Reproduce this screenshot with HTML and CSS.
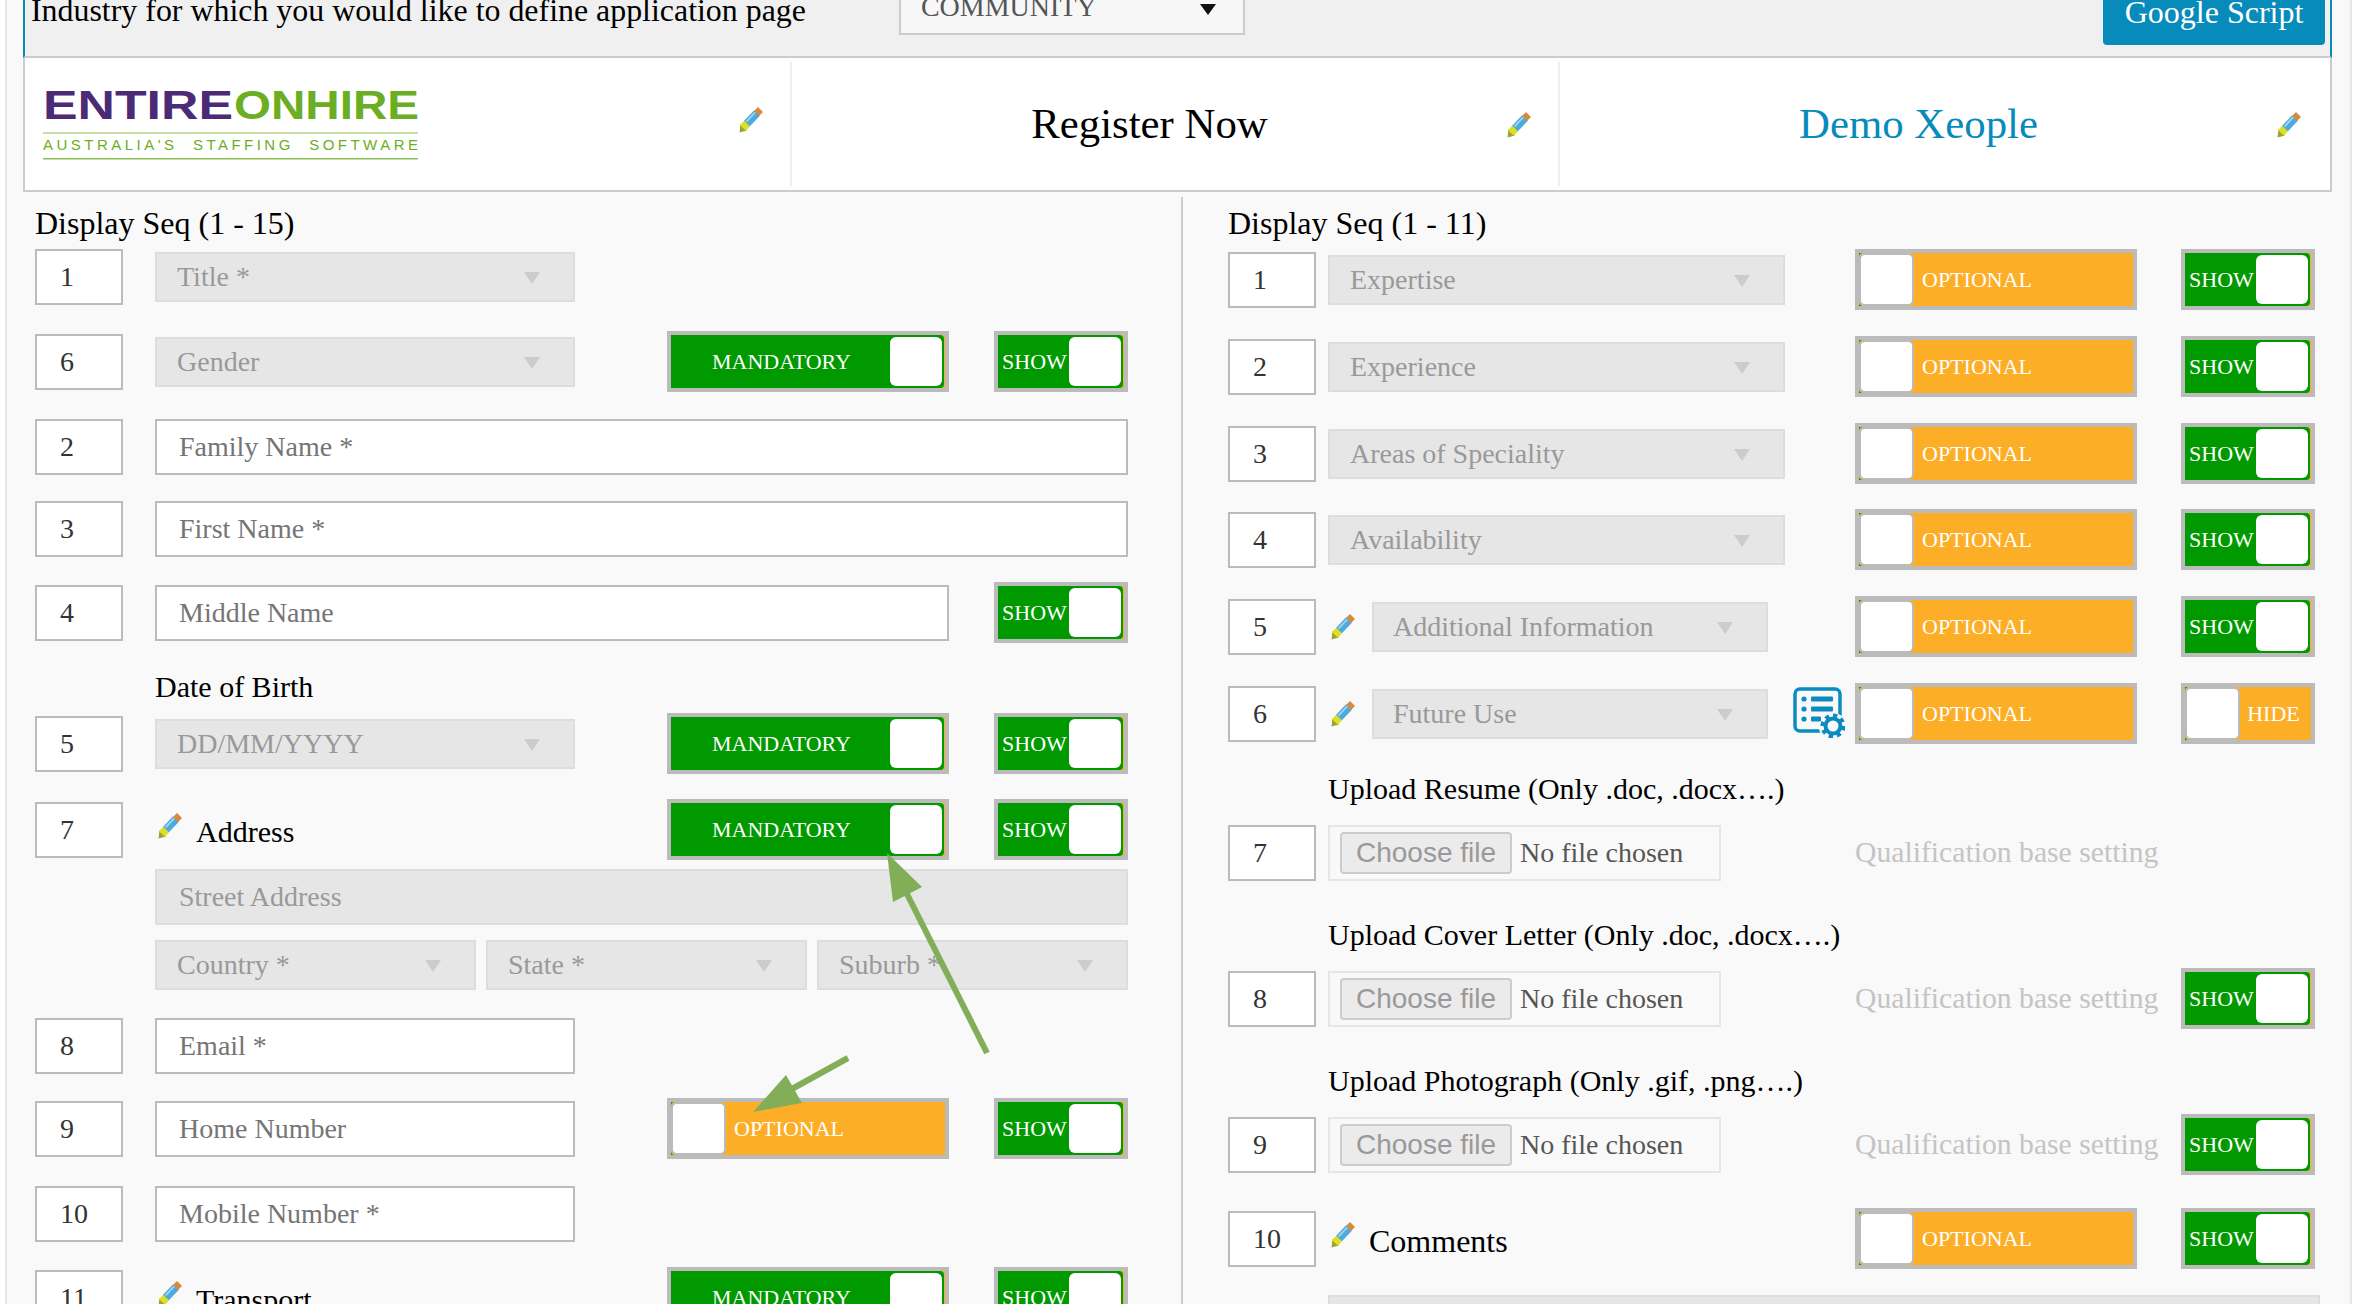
FILE: index.html
```html
<!DOCTYPE html>
<html lang="en">
<head>
<meta charset="utf-8">
<title>Application page settings</title>
<link rel="stylesheet" href="styles.css">
</head>
<body>
<svg class="defs" aria-hidden="true">
  <symbol id="pencil" viewBox="0 0 25 26">
    <polygon points="0.5,25.5 1.5,17 8,23.5" fill="#9aa23a"/>
    <line x1="4" y1="21" x2="8.5" y2="16" stroke="#dde022" stroke-width="8"/>
    <line x1="8" y1="16.5" x2="18" y2="6" stroke="#4ea9de" stroke-width="8"/>
    <line x1="7.5" y1="14.5" x2="16.5" y2="5" stroke="#a9d6f0" stroke-width="1.8"/>
    <line x1="17.5" y1="6.5" x2="21.5" y2="2.5" stroke="#d58a3e" stroke-width="7"/>
  </symbol>
</svg>

<div class="page">
  <div class="topbar">
    <span class="industry">Industry for which you would like to define application page</span>
    <span class="community">COMMUNITY<i class="arrow-black"></i></span>
    <span class="script-btn">Google Script</span>
  </div>

  <div class="brandbar">
    <div class="brand-cell">
      <svg class="logo" viewBox="0 0 376 72" role="img" aria-label="EntireOnHire logo">
        <text class="logo-word logo-purple" x="0" y="30" textLength="190" lengthAdjust="spacingAndGlyphs">ENTIRE</text>
        <text class="logo-word logo-green" x="191" y="30" textLength="185" lengthAdjust="spacingAndGlyphs">ONHIRE</text>
        <rect class="logo-rule-light" x="0" y="43" width="375" height="2"/>
        <text class="logo-tag" x="0" y="61" textLength="375">AUSTRALIA'S  STAFFING  SOFTWARE</text>
        <rect class="logo-rule" x="0" y="69" width="375" height="1.5"/>
      </svg>
      <svg class="pencil pencil-first"><use href="#pencil"/></svg>
    </div>
    <div class="brand-cell brand-mid">
      <span class="brand-title">Register Now</span>
      <svg class="pencil pencil-mid"><use href="#pencil"/></svg>
    </div>
    <div class="brand-cell brand-last">
      <span class="brand-title brand-blue">Demo Xeople</span>
      <svg class="pencil pencil-last"><use href="#pencil"/></svg>
    </div>
  </div>

  <div class="main">
    <section class="col-left">
      <h2 class="seq-title">Display Seq (1 - 15)</h2>

      <div class="row mt-5">
        <span class="seq">1</span>
        <span class="sel sel-l">Title *<i class="tri"></i></span>
      </div>

      <div class="row mt-24">
        <span class="seq">6</span>
        <span class="sel sel-l">Gender<i class="tri"></i></span>
        <div class="switches">
          <span class="sw sw-on"><span class="fill"><span class="sw-text">MANDATORY</span><i class="knob"></i></span></span>
          <span class="sw sw-on sw-small"><span class="fill"><span class="sw-text">SHOW</span><i class="knob"></i></span></span>
        </div>
      </div>

      <div class="row mt-24">
        <span class="seq">2</span>
        <span class="inp inp-full">Family Name *</span>
      </div>

      <div class="row mt-21">
        <span class="seq">3</span>
        <span class="inp inp-full">First Name *</span>
      </div>

      <div class="row mt-23">
        <span class="seq">4</span>
        <span class="inp inp-mid">Middle Name</span>
        <div class="switches">
          <span class="sw sw-on sw-small"><span class="fill"><span class="sw-text">SHOW</span><i class="knob"></i></span></span>
        </div>
      </div>

      <div class="caption cap-left mt-26">Date of Birth</div>

      <div class="row mt-8">
        <span class="seq">5</span>
        <span class="sel sel-l">DD/MM/YYYY<i class="tri"></i></span>
        <div class="switches">
          <span class="sw sw-on"><span class="fill"><span class="sw-text">MANDATORY</span><i class="knob"></i></span></span>
          <span class="sw sw-on sw-small"><span class="fill"><span class="sw-text">SHOW</span><i class="knob"></i></span></span>
        </div>
      </div>

      <div class="row mt-25">
        <span class="seq">7</span>
        <span class="named"><svg class="pencil pencil-inline"><use href="#pencil"/></svg>Address</span>
        <div class="switches">
          <span class="sw sw-on"><span class="fill"><span class="sw-text">MANDATORY</span><i class="knob"></i></span></span>
          <span class="sw sw-on sw-small"><span class="fill"><span class="sw-text">SHOW</span><i class="knob"></i></span></span>
        </div>
      </div>

      <div class="indent mt-9">
        <span class="sel sel-street">Street Address</span>
      </div>
      <div class="indent addr mt-15">
        <span class="sel sel-addr">Country *<i class="tri"></i></span>
        <span class="sel sel-addr">State *<i class="tri"></i></span>
        <span class="sel sel-addr">Suburb *<i class="tri"></i></span>
      </div>

      <div class="row mt-25">
        <span class="seq">8</span>
        <span class="inp inp-short">Email *</span>
      </div>

      <div class="row mt-22">
        <span class="seq">9</span>
        <span class="inp inp-short">Home Number</span>
        <div class="switches">
          <span class="sw sw-off"><span class="fill"><i class="knob"></i><span class="sw-text">OPTIONAL</span></span></span>
          <span class="sw sw-on sw-small"><span class="fill"><span class="sw-text">SHOW</span><i class="knob"></i></span></span>
        </div>
      </div>

      <div class="row mt-24">
        <span class="seq">10</span>
        <span class="inp inp-short">Mobile Number *</span>
      </div>

      <div class="row mt-23">
        <span class="seq">11</span>
        <span class="named"><svg class="pencil pencil-inline"><use href="#pencil"/></svg>Transport</span>
        <div class="switches">
          <span class="sw sw-on"><span class="fill"><span class="sw-text">MANDATORY</span><i class="knob"></i></span></span>
          <span class="sw sw-on sw-small"><span class="fill"><span class="sw-text">SHOW</span><i class="knob"></i></span></span>
        </div>
      </div>
    </section>

    <section class="col-right">
      <h2 class="seq-title">Display Seq (1 - 11)</h2>

      <div class="row rrow mt-8">
        <span class="seq">1</span>
        <span class="sel sel-r">Expertise<i class="tri"></i></span>
        <div class="switches">
          <span class="sw sw-off"><span class="fill"><i class="knob"></i><span class="sw-text">OPTIONAL</span></span></span>
          <span class="sw sw-on sw-small"><span class="fill"><span class="sw-text">SHOW</span><i class="knob"></i></span></span>
        </div>
      </div>

      <div class="row rrow mt-26">
        <span class="seq">2</span>
        <span class="sel sel-r">Experience<i class="tri"></i></span>
        <div class="switches">
          <span class="sw sw-off"><span class="fill"><i class="knob"></i><span class="sw-text">OPTIONAL</span></span></span>
          <span class="sw sw-on sw-small"><span class="fill"><span class="sw-text">SHOW</span><i class="knob"></i></span></span>
        </div>
      </div>

      <div class="row rrow mt-26">
        <span class="seq">3</span>
        <span class="sel sel-r">Areas of Speciality<i class="tri"></i></span>
        <div class="switches">
          <span class="sw sw-off"><span class="fill"><i class="knob"></i><span class="sw-text">OPTIONAL</span></span></span>
          <span class="sw sw-on sw-small"><span class="fill"><span class="sw-text">SHOW</span><i class="knob"></i></span></span>
        </div>
      </div>

      <div class="row rrow mt-25">
        <span class="seq">4</span>
        <span class="sel sel-r">Availability<i class="tri"></i></span>
        <div class="switches">
          <span class="sw sw-off"><span class="fill"><i class="knob"></i><span class="sw-text">OPTIONAL</span></span></span>
          <span class="sw sw-on sw-small"><span class="fill"><span class="sw-text">SHOW</span><i class="knob"></i></span></span>
        </div>
      </div>

      <div class="row rrow mt-26">
        <span class="seq">5</span>
        <svg class="pencil pencil-row"><use href="#pencil"/></svg>
        <span class="sel sel-rs">Additional Information<i class="tri"></i></span>
        <div class="switches">
          <span class="sw sw-off"><span class="fill"><i class="knob"></i><span class="sw-text">OPTIONAL</span></span></span>
          <span class="sw sw-on sw-small"><span class="fill"><span class="sw-text">SHOW</span><i class="knob"></i></span></span>
        </div>
      </div>

      <div class="row rrow mt-26">
        <span class="seq">6</span>
        <svg class="pencil pencil-row"><use href="#pencil"/></svg>
        <span class="sel sel-rs">Future Use<i class="tri"></i></span>
        <svg class="cfg" viewBox="0 0 52 51" aria-hidden="true">
          <rect class="cfg-frame" x="2" y="2" width="45" height="42" rx="5"/>
          <circle class="cfg-clear" cx="40" cy="40" r="14"/>
          <circle class="cfg-dot" cx="11" cy="12" r="2.6"/>
          <circle class="cfg-dot" cx="11" cy="22" r="2.6"/>
          <circle class="cfg-dot" cx="11" cy="32" r="2.6"/>
          <rect class="cfg-dot" x="18" y="9.5" width="22" height="5" rx="1"/>
          <rect class="cfg-dot" x="18" y="19.5" width="22" height="5" rx="1"/>
          <rect class="cfg-dot" x="18" y="29.5" width="10" height="5" rx="1"/>
          <circle class="cfg-teeth" cx="40" cy="39" r="10.5"/>
          <circle class="cfg-ring" cx="40" cy="39" r="7.5"/>
        </svg>
        <div class="switches">
          <span class="sw sw-off"><span class="fill"><i class="knob"></i><span class="sw-text">OPTIONAL</span></span></span>
          <span class="sw sw-off sw-small"><span class="fill"><i class="knob"></i><span class="sw-text sw-center">HIDE</span></span></span>
        </div>
      </div>

      <div class="caption cap-right mt-25">Upload Resume (Only .doc, .docx….)</div>
      <div class="row rrow mt-13">
        <span class="seq">7</span>
        <span class="filebox"><span class="filebtn">Choose file</span><span class="filetxt">No file chosen</span></span>
        <div class="switches">
          <span class="qual">Qualification base setting</span>
          <span class="sw-slot"></span>
        </div>
      </div>

      <div class="caption cap-right mt-32">Upload Cover Letter (Only .doc, .docx….)</div>
      <div class="row rrow mt-13">
        <span class="seq">8</span>
        <span class="filebox"><span class="filebtn">Choose file</span><span class="filetxt">No file chosen</span></span>
        <div class="switches">
          <span class="qual">Qualification base setting</span>
          <span class="sw sw-on sw-small"><span class="fill"><span class="sw-text">SHOW</span><i class="knob"></i></span></span>
        </div>
      </div>

      <div class="caption cap-right mt-32">Upload Photograph (Only .gif, .png….)</div>
      <div class="row rrow mt-13">
        <span class="seq">9</span>
        <span class="filebox"><span class="filebtn">Choose file</span><span class="filetxt">No file chosen</span></span>
        <div class="switches">
          <span class="qual">Qualification base setting</span>
          <span class="sw sw-on sw-small"><span class="fill"><span class="sw-text">SHOW</span><i class="knob"></i></span></span>
        </div>
      </div>

      <div class="row rrow mt-33">
        <span class="seq">10</span>
        <span class="named named-big"><svg class="pencil pencil-inline"><use href="#pencil"/></svg>Comments</span>
        <div class="switches">
          <span class="sw sw-off"><span class="fill"><i class="knob"></i><span class="sw-text">OPTIONAL</span></span></span>
          <span class="sw sw-on sw-small"><span class="fill"><span class="sw-text">SHOW</span><i class="knob"></i></span></span>
        </div>
      </div>

      <div class="sel sel-wide mt-26"></div>
    </section>
  </div>
</div>

<svg class="callouts" viewBox="0 0 2362 1304" aria-hidden="true">
  <line class="callout-line" x1="987" y1="1053" x2="905" y2="890"/>
  <polygon class="callout-head" points="887,853 893,902 922,887"/>
  <line class="callout-line" x1="848" y1="1058" x2="790" y2="1090"/>
  <polygon class="callout-head" points="753,1112 786,1075 802,1103"/>
</svg>
</body>
</html>
```

FILE: styles.css
```css
* { box-sizing: border-box; }

html, body {
  margin: 0;
  height: 1304px;
  overflow: hidden;
  background: #fff;
}

body {
  position: relative;
  font-family: "Liberation Serif", "Times New Roman", serif;
  color: #000;
}

.defs { position: absolute; width: 0; height: 0; }

.page {
  width: 2347px;
  height: 1304px;
  margin-left: 5px;
  background: #f9f9f9;
  border-left: 2px solid #e6e6e6;
  border-right: 2px solid #e6e6e6;
  overflow: hidden;
}

/* top strip */
.topbar {
  display: flex;
  align-items: flex-start;
  height: 58px;
  margin: 0 18px 0 16px;
  padding: 0 5px 0 6px;
  background: #f0f0f0;
  border-left: 2px solid #078bbb;
  border-right: 2px solid #078bbb;
  border-bottom: 2px solid #ccc;
}

.industry {
  flex: none;
  margin-top: -9px;
  font-size: 31.9px;
  line-height: 40px;
}

.community {
  flex: none;
  display: flex;
  align-items: center;
  width: 346px;
  height: 60px;
  margin: -25px 0 0 93px;
  padding: 4px 0 0 20px;
  font-size: 28px;
  color: #555;
  background: #f7f7f7;
  border: 2px solid #ccc;
}

.arrow-black {
  width: 0;
  height: 0;
  margin: 4px 0 0 103px;
  border-left: 8px solid transparent;
  border-right: 8px solid transparent;
  border-top: 11px solid #111;
}

.script-btn {
  flex: none;
  display: flex;
  align-items: center;
  justify-content: center;
  width: 222px;
  height: 70px;
  margin: -25px 0 0 auto;
  padding-top: 4px;
  font-size: 32px;
  color: #fff;
  background: #078bbb;
  border-radius: 4px;
}

/* branding strip */
.brandbar {
  display: flex;
  height: 134px;
  margin: 0 18px 0 16px;
  padding: 4px 0;
  background: #fff;
  border-left: 2px solid #ccc;
  border-right: 2px solid #ccc;
  border-bottom: 2px solid #ccc;
}

.brand-cell {
  display: flex;
  align-items: center;
  flex: none;
  width: 765px;
}

.brand-mid { width: 768px; border-left: 2px solid #eee; }
.brand-last { flex: 1; width: auto; border-left: 2px solid #eee; }

.logo {
  width: 376px;
  height: 72px;
  margin: 1px 0 0 18px;
  overflow: visible;
}

.logo-word {
  font-family: "Liberation Sans", Arial, sans-serif;
  font-size: 41px;
  font-weight: 700;
}

.logo-purple { fill: #4b2a76; }
.logo-green { fill: #6cae23; }
.logo-rule-light { fill: #c6e0a4; }
.logo-rule { fill: #8cc152; }

.logo-tag {
  font-family: "Liberation Sans", Arial, sans-serif;
  font-size: 15px;
  white-space: pre;
  fill: #6cae23;
}

.brand-title {
  flex: 1;
  font-size: 42.8px;
  line-height: 50px;
  text-align: center;
}

.brand-blue { color: #078bbb; }

.pencil {
  flex: none;
  width: 25px;
  height: 26px;
}

.pencil-first { margin: -8px 0 0 320px; }
.pencil-mid { margin: 2px 26px 0 0; }
.pencil-last { margin: 2px 28px 0 0; }

/* two columns */
.main {
  display: flex;
  padding-left: 28px;
}

.col-left {
  flex: none;
  width: 1093px;
  padding-top: 13px;
}

.col-right {
  flex: none;
  width: 1139px;
  height: 1200px;
  margin: 5px 0 0 53px;
  padding: 8px 0 0 45px;
  border-left: 2px solid #ccc;
}

.seq-title {
  margin: 0;
  font-size: 32px;
  font-weight: 400;
  line-height: 36px;
}

.mt-5 { margin-top: 5px; }
.mt-8 { margin-top: 8px; }
.mt-9 { margin-top: 9px; }
.mt-13 { margin-top: 13px; }
.mt-15 { margin-top: 15px; }
.mt-21 { margin-top: 21px; }
.mt-22 { margin-top: 22px; }
.mt-23 { margin-top: 23px; }
.mt-24 { margin-top: 24px; }
.mt-25 { margin-top: 25px; }
.mt-26 { margin-top: 26px; }
.mt-32 { margin-top: 32px; }
.mt-33 { margin-top: 33px; }

.row {
  display: flex;
  align-items: center;
  height: 61px;
}

.seq {
  flex: none;
  display: flex;
  align-items: center;
  width: 88px;
  height: 56px;
  margin-right: 32px;
  padding-left: 23px;
  font-size: 28px;
  color: #333;
  background: #fff;
  border: 2px solid #bbb;
}

.rrow { width: 1087px; }
.rrow .seq { margin-right: 12px; }

.sel {
  flex: none;
  position: relative;
  display: flex;
  align-items: center;
  height: 50px;
  padding-left: 20px;
  font-size: 28px;
  color: #999;
  background: #e6e6e6;
  border: 2px solid #ddd;
}

.sel-l { width: 420px; }
.sel-r { width: 457px; }
.sel-rs { width: 396px; padding-left: 19px; }
.sel-addr { width: 321px; }
.sel-addr:last-child { width: 311px; }
.sel-street { width: 973px; height: 56px; padding-left: 22px; }
.sel-wide { width: 992px; height: 56px; margin-left: 100px; }

.tri {
  position: absolute;
  top: 50%;
  right: 33px;
  margin-top: -5px;
  border-left: 8px solid transparent;
  border-right: 8px solid transparent;
  border-top: 12px solid #ccc;
}

.inp {
  flex: none;
  display: flex;
  align-items: center;
  height: 56px;
  padding-left: 22px;
  font-size: 28px;
  color: #757575;
  background: #fff;
  border: 2px solid #bbb;
}

.inp-full { width: 973px; }
.inp-mid { width: 794px; }
.inp-short { width: 420px; }

.indent { margin-left: 120px; }
.addr { display: flex; gap: 10px; }

.caption {
  font-size: 30px;
  line-height: 36px;
}

.cap-left { margin-left: 120px; }
.cap-right { margin-left: 100px; line-height: 40px; }

.named {
  display: flex;
  align-items: center;
  margin-top: 5px;
  font-size: 30px;
  line-height: 40px;
}

.named-big { font-size: 32px; }

.pencil-inline { margin: -12px 13px 0 3px; }
.pencil-row { margin: 0 16px 0 3px; }

.switches {
  flex: none;
  display: flex;
  gap: 44px;
  margin-left: auto;
}

.col-left .switches { gap: 45px; }

.sw {
  flex: none;
  display: block;
  width: 282px;
  height: 61px;
  border: 4px solid #bbb;
  background: #fdae27;
}

.sw-small { width: 134px; }
.sw-off { background: #090; }

.fill {
  display: flex;
  align-items: center;
  height: 100%;
  background: #090;
}

.sw-on .fill { border-radius: 0 4px 4px 0; margin-right: 1px; }
.sw-off .fill { background: #fdae27; border-radius: 4px 0 0 4px; }

.sw-text {
  font-size: 22px;
  color: #fff;
}

.sw-on .sw-text { flex: 1; padding-left: 2px; text-align: center; }
.sw-off .sw-text { padding-left: 8px; }
.sw-off .sw-center { flex: 1; padding: 0 4px 0 0; text-align: center; }

.knob {
  flex: none;
  width: 52px;
  height: 49px;
  margin-right: 2px;
  background: #fff;
  border-radius: 6px;
}

.sw-off .knob {
  width: 55px;
  height: 53px;
  margin: 0;
  border: 2px solid #bbb;
  border-radius: 6px;
}

.sw-slot { flex: none; width: 134px; }

.filebox {
  flex: none;
  display: flex;
  align-items: center;
  width: 393px;
  height: 56px;
  padding-left: 10px;
  border: 2px solid #e6e6e6;
}

.filebtn {
  flex: none;
  display: flex;
  align-items: center;
  justify-content: center;
  width: 172px;
  height: 42px;
  font-family: "Liberation Sans", Arial, sans-serif;
  font-size: 28px;
  color: #999;
  background: #ebebeb;
  border: 2px solid #ccc;
  border-radius: 4px;
}

.filetxt {
  margin-left: 8px;
  font-size: 28px;
  color: #555;
}

.qual {
  flex: none;
  display: flex;
  align-items: center;
  width: 282px;
  font-size: 29.7px;
  color: #c4c4c4;
  white-space: nowrap;
}

/* annotation arrows drawn over the form */
.callouts {
  position: absolute;
  top: 0;
  left: 0;
  width: 2362px;
  height: 1304px;
  pointer-events: none;
}

.callout-line { stroke: #82ae57; stroke-width: 6; }
.callout-head { fill: #82ae57; }

/* settings glyph */
.cfg {
  flex: none;
  width: 52px;
  height: 51px;
  margin: -3px 0 0 25px;
}

.cfg-frame { fill: none; stroke: #0a8cc0; stroke-width: 3.5; }
.cfg-clear { fill: #f9f9f9; }
.cfg-dot { fill: #0a8cc0; }
.cfg-ring { fill: none; stroke: #0a8cc0; stroke-width: 4; }
.cfg-teeth { fill: none; stroke: #0a8cc0; stroke-width: 4; stroke-dasharray: 4.2 4; }
```
